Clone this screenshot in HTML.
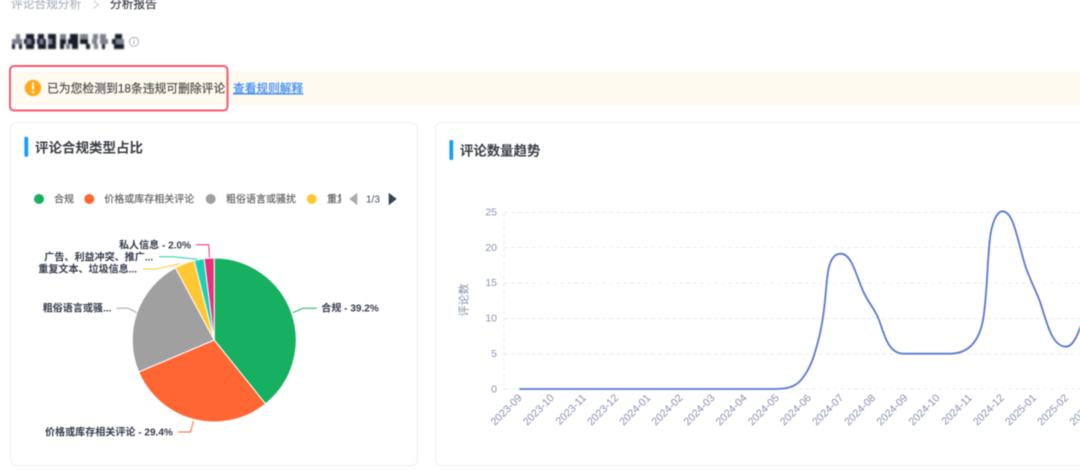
<!DOCTYPE html>
<html lang="zh">
<head>
<meta charset="utf-8">
<title>分析报告</title>
<style>
html,body{margin:0;padding:0;width:1080px;height:470px;overflow:hidden;background:#fff}
svg{display:block;filter:blur(.4px)}
text{font-family:"Liberation Sans","Noto Sans CJK SC",sans-serif}
.b{stroke-width:.22px}
.lb{font-size:10.05px;font-weight:700;fill:#363c4c}
.lg{font-size:10px;fill:#5f5f5f;stroke:#5f5f5f;stroke-width:.15px}
.ya{font-size:10.5px;fill:#8891ad;text-anchor:end}
.xa{font-size:10.6px;fill:#8891ad;text-anchor:end}
.gd{stroke:#e9ecf6;stroke-width:1;stroke-dasharray:4 3;fill:none}
</style>
</head>
<body>
<svg width="1080" height="470" viewBox="0 0 1080 470" xmlns="http://www.w3.org/2000/svg">
  <!-- breadcrumb -->
  <text x="11" y="8" font-size="11.7" fill="#b0b5c1" stroke="#b0b5c1" class="b">评论合规分析</text>
  <path d="M93.5 0.5L98.5 4.5L93.5 8.5" fill="none" stroke="#c5c9d2" stroke-width="1"/>
  <text x="110" y="8" font-size="11.7" fill="#40444e" stroke="#40444e" class="b">分析报告</text>

  <!-- mosaic title -->
  <g filter="url(#m)">
    <g fill="#7d818c">
      <rect x="16" y="34" width="4" height="5"/><rect x="60" y="34" width="6" height="5"/><rect x="80" y="34" width="8" height="5"/><rect x="93" y="34" width="5" height="5"/><rect x="100" y="34" width="6" height="5"/>
      <rect x="12" y="39" width="10" height="5"/><rect x="92" y="39" width="5" height="5"/><rect x="100" y="39" width="8" height="5"/><rect x="94" y="44" width="4" height="5"/><rect x="66" y="44" width="4" height="5"/><rect x="116" y="39" width="4" height="5"/><rect x="120" y="39" width="4" height="5"/>
      <rect x="27" y="39" width="4" height="5"/><rect x="40" y="39" width="3" height="5"/><rect x="48" y="39" width="4" height="5"/>
    </g>
    <g fill="#161b2a">
      <rect x="26" y="34" width="8" height="5"/><rect x="38" y="34" width="6" height="5"/><rect x="48" y="34" width="8" height="5"/><rect x="70" y="34" width="8" height="5"/><rect x="115" y="34" width="7" height="5"/>
      <rect x="24" y="39" width="3" height="5"/><rect x="31" y="39" width="4" height="5"/><rect x="37" y="39" width="3" height="5"/><rect x="43" y="39" width="3" height="5"/><rect x="52" y="39" width="4" height="5"/><rect x="60" y="39" width="6" height="5"/><rect x="68" y="39" width="10" height="5"/><rect x="80" y="39" width="8" height="5"/><rect x="112" y="39" width="4" height="5"/>
      <rect x="12" y="44" width="3" height="5"/><rect x="19" y="44" width="3" height="5"/><rect x="26" y="44" width="8" height="5"/><rect x="38" y="44" width="8" height="5"/><rect x="48" y="44" width="8" height="5"/><rect x="60" y="44" width="4" height="5"/><rect x="72" y="44" width="6" height="5"/><rect x="86" y="44" width="4" height="5"/><rect x="102" y="44" width="3" height="5"/><rect x="114" y="44" width="10" height="5"/>
    </g>
  </g>
  <defs><filter id="m" x="-5%" y="-30%" width="110%" height="160%"><feGaussianBlur stdDeviation="0.8"/></filter></defs>

  <!-- info icon -->
  <circle cx="134" cy="41.8" r="4.6" fill="none" stroke="#a9afc0" stroke-width="1"/>
  <path d="M134 40.6V44.4M134 38.8V39.7" stroke="#a9afc0" stroke-width="1" fill="none"/>

  <!-- alert -->
  <rect x="12" y="71.5" width="1080" height="33.5" rx="6" fill="#fefaf0"/>
  <circle cx="33" cy="88" r="8.2" fill="#ffaa1c"/>
  <path d="M33 83V89" stroke="#fff" stroke-width="1.8" stroke-linecap="round"/>
  <circle cx="33" cy="92.2" r="1.1" fill="#fff"/>
  <text x="47" y="92.3" font-size="11.8" fill="#505050" stroke="#505050" class="b">已为您检测到18条违规可删除评论</text>
  <text x="233" y="92.3" font-size="11.7" fill="#3f8cf0" stroke="#3f8cf0" class="b" text-decoration="underline">查看规则解释</text>
  <rect x="10" y="66" width="217.5" height="44.5" rx="4" fill="none" stroke="#f8586c" stroke-width="2"/>

  <!-- cards -->
  <rect x="10.5" y="122.5" width="407" height="343" rx="6" fill="#fff" stroke="#ebedf0"/>
  <rect x="435.5" y="122.5" width="700" height="343" rx="6" fill="#fff" stroke="#ebedf0"/>

  <!-- card 1 title -->
  <rect x="24.4" y="136.7" width="3.8" height="20" rx="1.5" fill="#149dff"/>
  <text x="35" y="152.4" font-size="13.5" font-weight="700" fill="#3a3d45">评论合规类型占比</text>

  <!-- legend -->
  <circle cx="39" cy="199" r="5" fill="#17b060"/>
  <text x="54" y="202.5" class="lg">合规</text>
  <circle cx="89.3" cy="199" r="5" fill="#ff6633"/>
  <text x="104.3" y="202.5" class="lg">价格或库存相关评论</text>
  <circle cx="210.7" cy="199" r="5" fill="#a0a0a0"/>
  <text x="226" y="202.5" class="lg">粗俗语言或骚扰</text>
  <circle cx="311.7" cy="199" r="5" fill="#ffc733"/>
  <clipPath id="c"><rect x="320" y="190" width="21" height="20"/></clipPath>
  <text x="327" y="202.5" class="lg" clip-path="url(#c)">重复文本</text>
  <path d="M349.3 199L357.3 192.8V205.2Z" fill="#aaa"/>
  <text x="366" y="202.5" font-size="10" fill="#444c5c">1/3</text>
  <path d="M396.7 199L388.7 192.8V205.2Z" fill="#2f4554"/>

  <!-- pie -->
  <g stroke="#fff" stroke-width="1" stroke-linejoin="round">
    <path d="M214.2 340L214.2 258A82 82 0 0 1 265.6 403.9Z" fill="#17b060"/>
    <path d="M214.2 340L265.6 403.9A82 82 0 0 1 138.7 372Z" fill="#ff6633"/>
    <path d="M214.2 340L138.7 372A82 82 0 0 1 175.4 267.8Z" fill="#a0a0a0"/>
    <path d="M214.2 340L175.4 267.8A82 82 0 0 1 194.2 260.5Z" fill="#ffc733"/>
    <path d="M214.2 340L194.2 260.5A82 82 0 0 1 204.1 258.6Z" fill="#1ccfb3"/>
    <path d="M214.2 340L204.1 258.6A82 82 0 0 1 214.2 258Z" fill="#ec2f7b"/>
  </g>
  <g fill="none" stroke-width="1">
    <path d="M196 244.7H208.7L209.4 257.5" stroke="#ec2f7b"/>
    <path d="M159 256.7H173.3L197.3 259.3" stroke="#1ccfb3"/>
    <path d="M142.3 269H156.7L180 263.7" stroke="#ffc733"/>
    <path d="M116.7 308.3H128.3L136.7 312.7" stroke="#a0a0a0"/>
    <path d="M316.7 308.3H303.3L292.7 312.7" stroke="#17b060"/>
    <path d="M178.3 432H190.7L193.3 421" stroke="#ff6633"/>
  </g>
  <text x="119" y="248.3" class="lb">私人信息 - 2.0%</text>
  <text x="44.3" y="260.3" class="lb">广告、利益冲突、推广...</text>
  <text x="38.3" y="272.6" class="lb">重复文本、垃圾信息...</text>
  <text x="42.7" y="311.6" class="lb">粗俗语言或骚...</text>
  <text x="321.3" y="311.6" class="lb">合规 - 39.2%</text>
  <text x="45" y="435.6" class="lb">价格或库存相关评论 - 29.4%</text>

  <!-- card 2 title -->
  <rect x="449.4" y="140" width="3.8" height="20" rx="1.5" fill="#149dff"/>
  <text x="460" y="155.4" font-size="13.4" font-weight="700" fill="#3a3d45">评论数量趋势</text>

  <!-- axes -->
  <path class="gd" d="M504 212.5H1080M504 247.5H1080M504 283H1080M504 318.5H1080M504 354H1080M504 389H1080M504 212.5V389"/>
  <text x="497" y="215.4" class="ya">25</text>
  <text x="497" y="250.8" class="ya">20</text>
  <text x="497" y="286.2" class="ya">15</text>
  <text x="497" y="321.6" class="ya">10</text>
  <text x="497" y="357" class="ya">5</text>
  <text x="497" y="392.4" class="ya">0</text>
  <text transform="translate(467.5,300) rotate(-90)" font-size="11" fill="#8891ad" text-anchor="middle">评论数</text>

  <g class="x">
    <text class="xa" transform="translate(522.5,398.5) rotate(-45)">2023-09</text>
    <text class="xa" transform="translate(554.7,398.5) rotate(-45)">2023-10</text>
    <text class="xa" transform="translate(586.8,398.5) rotate(-45)">2023-11</text>
    <text class="xa" transform="translate(619,398.5) rotate(-45)">2023-12</text>
    <text class="xa" transform="translate(651.1,398.5) rotate(-45)">2024-01</text>
    <text class="xa" transform="translate(683.3,398.5) rotate(-45)">2024-02</text>
    <text class="xa" transform="translate(715.4,398.5) rotate(-45)">2024-03</text>
    <text class="xa" transform="translate(747.5,398.5) rotate(-45)">2024-04</text>
    <text class="xa" transform="translate(779.7,398.5) rotate(-45)">2024-05</text>
    <text class="xa" transform="translate(811.8,398.5) rotate(-45)">2024-06</text>
    <text class="xa" transform="translate(844,398.5) rotate(-45)">2024-07</text>
    <text class="xa" transform="translate(876.1,398.5) rotate(-45)">2024-08</text>
    <text class="xa" transform="translate(908.3,398.5) rotate(-45)">2024-09</text>
    <text class="xa" transform="translate(940.4,398.5) rotate(-45)">2024-10</text>
    <text class="xa" transform="translate(972.6,398.5) rotate(-45)">2024-11</text>
    <text class="xa" transform="translate(1004.7,398.5) rotate(-45)">2024-12</text>
    <text class="xa" transform="translate(1036.9,398.5) rotate(-45)">2025-01</text>
    <text class="xa" transform="translate(1069,398.5) rotate(-45)">2025-02</text>
    <text class="xa" transform="translate(1101.2,398.5) rotate(-45)">2025-03</text>
  </g>

  <!-- line -->
  <path d="M519.3 389H770" stroke="#5b78cf" stroke-width="1.8" fill="none"/>
  <g transform="translate(750 190) scale(.33333)">
    <path fill="none" stroke="#5b78cf" stroke-width="5.4" d="M60 597C100 597 125 595 145 578C165 560 185 525 197 480C215 420 222 370 228 300C232 245 238 191 272 191C305 191 318 255 338 300C352 335 370 350 385 385C400 420 410 490 460 491L600 491C655 491 688 455 700 385C713 300 712 190 722 130C730 85 745 64 757 64C790 64 800 140 825 225C840 270 855 295 870 335C890 395 905 470 948 470C970 470 985 430 995 400"/>
  </g>
</svg>
</body>
</html>
